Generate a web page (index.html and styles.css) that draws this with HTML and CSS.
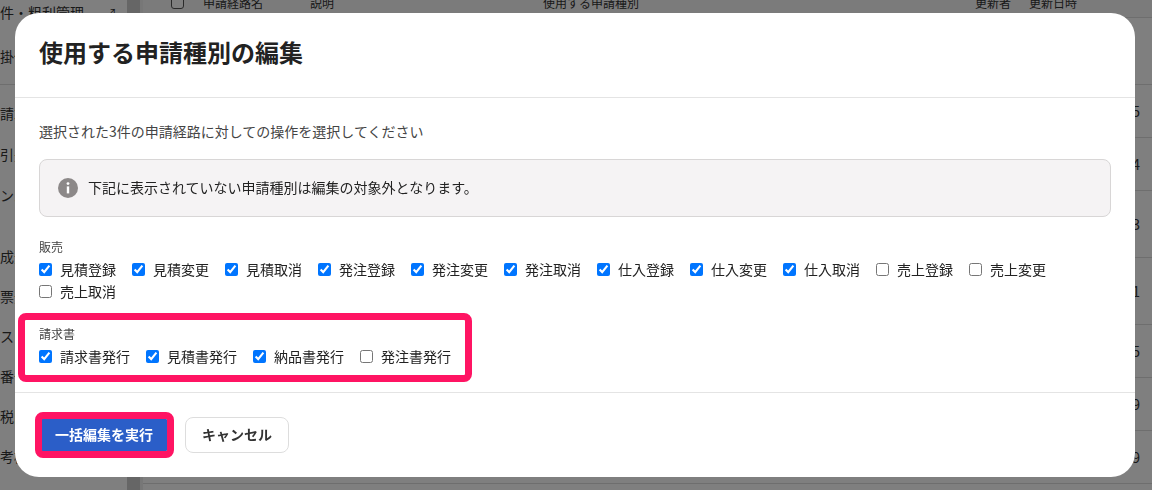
FILE: index.html
```html
<!DOCTYPE html>
<html lang="ja">
<head>
  <meta charset="UTF-8" />
  <title>使用する申請種別の編集</title>
  <link rel="stylesheet" href="styles.css">
</head>
<body>
  <!-- page behind the dialog -->
  <div class="page">
    <nav class="sidebar">
      <div class="side-group side-group-top">
        <div class="side-item side-item-first">件・粗利管理<span class="side-mark">↗</span></div>
        <div class="side-item">掛仕入</div>
      </div>
      <div class="side-group">
        <div class="side-item">請求</div>
        <div class="side-item">引先</div>
        <div class="side-item">ンバー</div>
      </div>
      <div class="side-group side-group-low">
        <div class="side-item">成元</div>
        <div class="side-item">票元</div>
        <div class="side-item">スク</div>
        <div class="side-item">番号</div>
        <div class="side-item">税区分</div>
        <div class="side-item">考欄</div>
      </div>
    </nav>
    <div class="splitter"></div>
    <main class="table">
      <div class="table-head">
        <span class="head-check"></span>
        <span class="col-name">申請経路名</span>
        <span class="col-desc">説明</span>
        <span class="col-type">使用する申請種別</span>
        <span class="col-user">更新者</span>
        <span class="col-date">更新日時</span>
      </div>
      <div class="table-spacer"></div>
      <div class="table-row">5</div>
      <div class="table-row">4</div>
      <div class="table-row table-row-tall">3</div>
      <div class="table-row table-row-tall">1</div>
      <div class="table-row">5</div>
      <div class="table-row">9</div>
      <div class="table-row">9</div>
    </main>
  </div>

  <div class="backdrop"></div>

  <div class="modal">
    <header class="modal-header">
      <h1>使用する申請種別の編集</h1>
    </header>

    <section class="modal-body">
      <p class="intro">選択された3件の申請経路に対しての操作を選択してください</p>

      <div class="notice">
        <svg class="notice-icon" viewBox="0 0 20 20" width="20" height="20">
          <circle cx="10" cy="10" r="10" fill="#8c8888"/>
          <circle cx="10" cy="5.6" r="1.4" fill="#fff"/>
          <rect x="8.8" y="8.4" width="2.4" height="7" fill="#fff"/>
        </svg>
        <span class="notice-text">下記に表示されていない申請種別は編集の対象外となります。</span>
      </div>

      <div class="group">
        <div class="group-label">販売</div>
        <div class="checks">
          <label class="check"><input type="checkbox" checked>見積登録</label>
          <label class="check"><input type="checkbox" checked>見積変更</label>
          <label class="check"><input type="checkbox" checked>見積取消</label>
          <label class="check"><input type="checkbox" checked>発注登録</label>
          <label class="check"><input type="checkbox" checked>発注変更</label>
          <label class="check"><input type="checkbox" checked>発注取消</label>
          <label class="check"><input type="checkbox" checked>仕入登録</label>
          <label class="check"><input type="checkbox" checked>仕入変更</label>
          <label class="check"><input type="checkbox" checked>仕入取消</label>
          <label class="check"><input type="checkbox">売上登録</label>
          <label class="check"><input type="checkbox">売上変更</label>
          <label class="check"><input type="checkbox">売上取消</label>
        </div>
      </div>

      <div class="group group-invoice">
        <div class="group-label">請求書</div>
        <div class="checks">
          <label class="check"><input type="checkbox" checked>請求書発行</label>
          <label class="check"><input type="checkbox" checked>見積書発行</label>
          <label class="check"><input type="checkbox" checked>納品書発行</label>
          <label class="check"><input type="checkbox">発注書発行</label>
        </div>
      </div>
    </section>

    <footer class="modal-footer">
      <button class="btn btn-primary">一括編集を実行</button>
      <button class="btn btn-cancel">キャンセル</button>
    </footer>

    <!-- pink annotation frames -->
    <div class="mark mark-group"></div>
    <div class="mark mark-button"></div>
  </div>
</body>
</html>
```

FILE: styles.css
```css
* {
  box-sizing: border-box;
}

html, body {
  height: 100%;
}

body {
  margin: 0;
  overflow: hidden;
  background: #fff;
  color: #222;
  font-family: "Noto Sans CJK JP", "Noto Sans", sans-serif;
  font-size: 14px;
}

/* page behind the dialog */
.page {
  display: flex;
  height: 100%;
  overflow: hidden;
}

.sidebar {
  width: 127px;
  flex-shrink: 0;
  overflow: hidden;
  color: #333;
}

.side-group {
  padding-top: 7px;
}

.side-group-top {
  padding-top: 0;
  margin-top: -8px;
  height: 93px;
  border-bottom: 1px solid #ddd;
}

.side-group-low {
  padding-top: 21px;
}

.side-item {
  display: flex;
  align-items: center;
  justify-content: space-between;
  height: 41px;
  padding-right: 10px;
  white-space: nowrap;
}

.side-item-first {
  height: 40px;
  margin-bottom: 3px;
}

.side-group-low .side-item {
  height: 40px;
}

.side-mark {
  font-size: 12px;
}

.splitter {
  width: 16px;
  flex-shrink: 0;
  background: #ccc;
  border-right: 3px solid #eee;
}

.table {
  flex: 1;
  min-width: 0;
}

.table-head {
  display: flex;
  align-items: center;
  height: 18px;
  background: #f6f6f6;
  border-bottom: 1px solid #ddd;
  font-size: 12px;
  color: #333;
  line-height: 12px;
  padding-bottom: 12px;
}

.head-check {
  width: 13px;
  height: 13px;
  margin-left: 28px;
  border: 1px solid #555;
  border-radius: 3px;
  background: #fff;
}

.col-name { margin-left: 19px; width: 107px; }
.col-desc { width: 233px; }
.col-type { width: 432px; }
.col-user { width: 54px; }
.col-date { width: 70px; }

.table-spacer {
  height: 67px;
  border-bottom: 1px solid #ddd;
}

.table-row {
  display: flex;
  align-items: center;
  justify-content: flex-end;
  height: 53px;
  padding-right: 12px;
  border-bottom: 1px solid #ddd;
  color: #333;
}

.table-row-tall {
  height: 67px;
}

.backdrop {
  position: fixed;
  inset: 0;
  background-color: rgba(0, 0, 0, 0.5);
}

/* dialog */
.modal {
  position: fixed;
  top: 13px;
  left: 15px;
  width: 1120px;
  height: 464px;
  background: #fff;
  border-radius: 24px;
  display: flex;
  flex-direction: column;
}

.modal-header {
  display: flex;
  align-items: center;
  height: 85px;
  padding: 0 24px 7px;
  border-bottom: 1px solid #e4e4e4;
}

.modal-header h1 {
  margin: 0;
  font-size: 24px;
  font-weight: 700;
  line-height: 32px;
  color: #222;
}

.modal-body {
  height: 295px;
  padding: 23px 24px 0;
  border-bottom: 1px solid #e4e4e4;
}

.intro {
  margin: 0;
  line-height: 20px;
  color: #444;
}

.notice {
  display: flex;
  align-items: center;
  gap: 10px;
  height: 58px;
  margin-top: 18px;
  padding: 0 18px;
  background: #f5f3f4;
  border: 1px solid #d8d6d6;
  border-radius: 8px;
}

.notice-icon {
  flex-shrink: 0;
}

.notice-text {
  margin-bottom: 2px;
}

.group {
  margin-top: 21px;
}

.group-invoice {
  margin-top: 23px;
}

.group-label {
  font-size: 12px;
  line-height: 18px;
  color: #444;
}

.checks {
  display: flex;
  flex-wrap: wrap;
  column-gap: 16px;
  margin-top: 2px;
}

.check {
  display: inline-flex;
  align-items: center;
  height: 22px;
  line-height: 22px;
}

.check input {
  width: 13px;
  height: 13px;
  margin: 0 8px 0 0;
}

.modal-footer {
  display: flex;
  gap: 16px;
  padding: 24px 24px 0;
}

.btn {
  height: 36px;
  padding: 0 16px 2px;
  border-radius: 8px;
  font-family: inherit;
  font-size: 14px;
  font-weight: 700;
}

.btn-primary {
  background: #2b5ec8;
  border: none;
  color: #fff;
}

.btn-cancel {
  background: #fff;
  border: 1px solid #ddd;
  color: #333;
}

/* annotation frames sit over the dialog content */
.mark {
  position: absolute;
  border: 7px solid #ff1463;
  border-radius: 8px;
  pointer-events: none;
}

.mark-group {
  left: 3px;
  top: 300px;
  width: 454px;
  height: 69px;
}

.mark-button {
  left: 20px;
  top: 399px;
  width: 139px;
  height: 46px;
}
```
